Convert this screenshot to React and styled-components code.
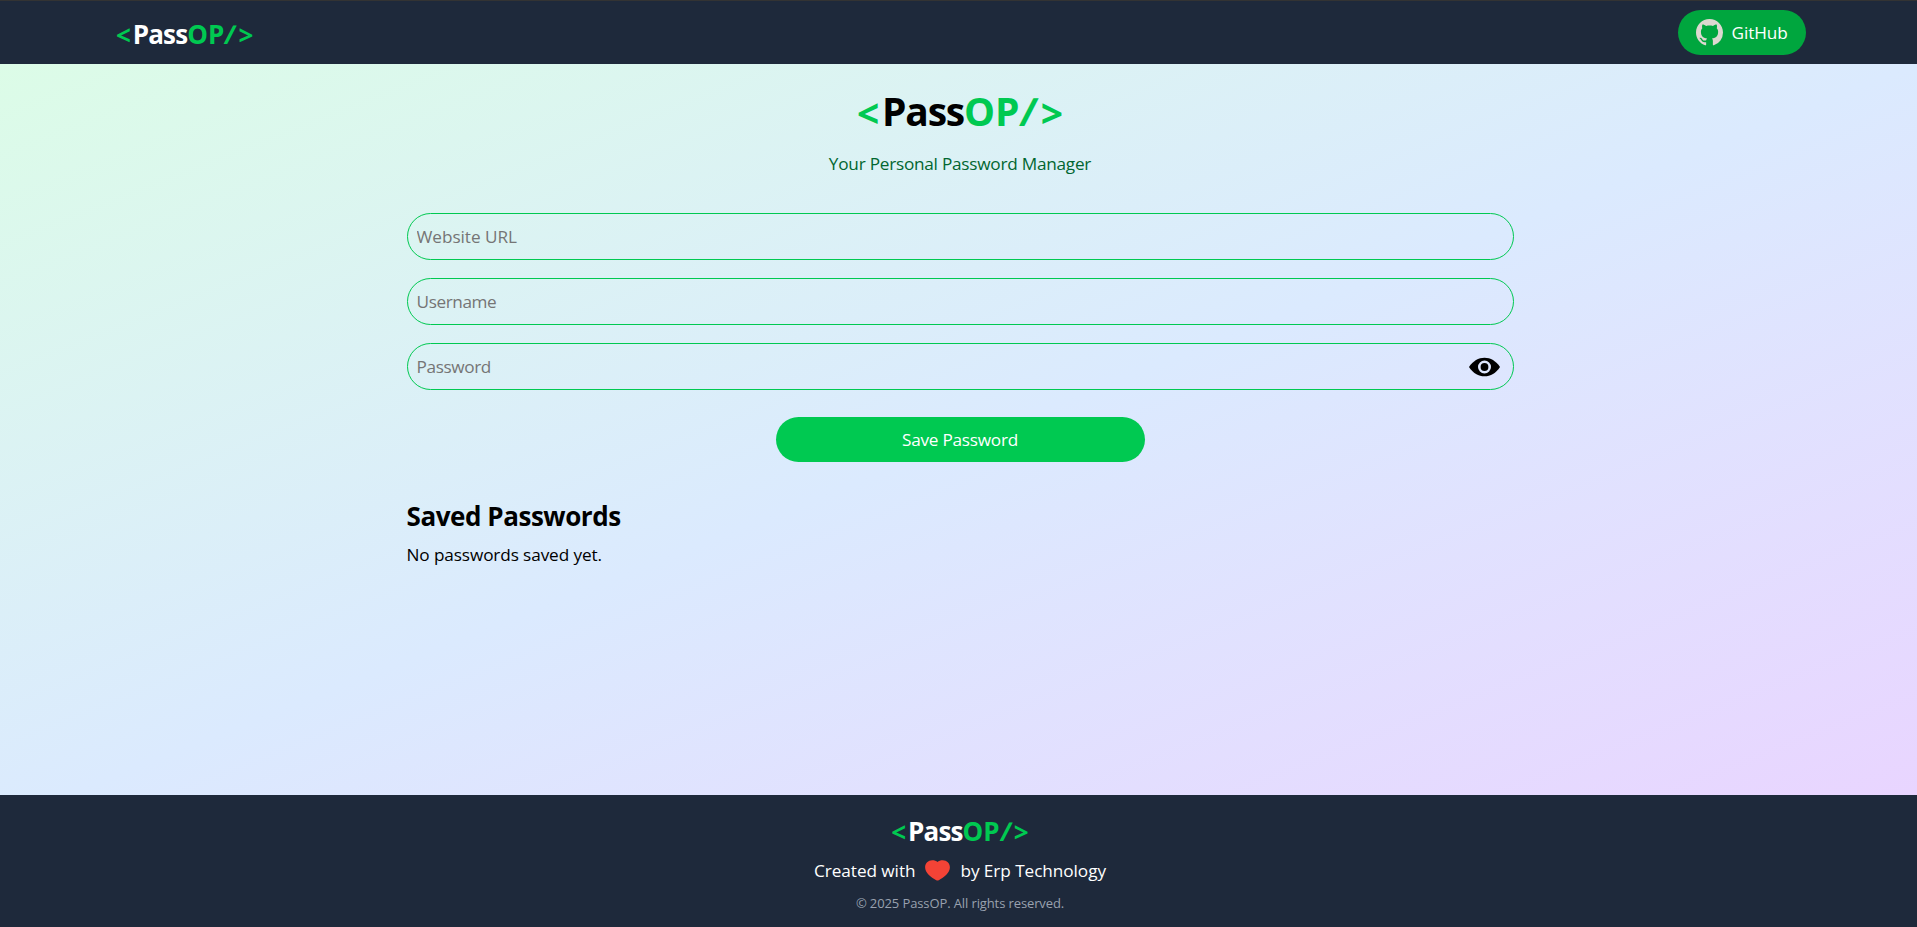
import React, { useState } from "react";
import styled, { createGlobalStyle } from "styled-components";
import { BsGithub } from "react-icons/bs";

const GlobalStyle = createGlobalStyle`
  *, *::before, *::after { box-sizing: border-box; }
  html { font-size: 18px; }
  body {
    margin: 0;
    overflow: hidden;
    font-family: "Segoe UI", "Open Sans", "Noto Sans", sans-serif;
    font-size: 17.2px;
    line-height: 27px;
    color: #000;
  }
  h1, h2, p { margin: 0; font-weight: inherit; font-size: inherit; }
`;

const Page = styled.div`
  width: 1920px;
  height: 927px;
  display: flex;
  flex-direction: column;
  border-top: 1px solid #333333;
`;

const Header = styled.header`
  flex: none;
  height: 63px;
  background: #1e293b;
  color: #fff;
`;

const HeaderInner = styled.div`
  width: 96rem;
  height: 100%;
  margin: 0 auto;
  padding: 0 1rem;
  display: flex;
  align-items: center;
  justify-content: space-between;
`;

const LogoText = styled.div`
  font-size: ${(p) => p.$size}px;
  line-height: ${(p) => p.$line}px;
  font-weight: 700;
  white-space: nowrap;
  padding: ${(p) => p.$pad || "0"};
`;

const Piece = styled.span`
  color: ${(p) => (p.$green ? "#00c951" : "inherit")};
  letter-spacing: ${(p) => p.$track || 0}em;
  margin-left: ${(p) => p.$lead || 0}em;
`;

/* The angle brackets sit slightly lower than the letters beside them. */
const Bracket = styled(Piece)`
  display: inline-block;
  transform: translateY(0.045em);
`;

/* A wider, more slanted slash than the font's own. */
const Slash = styled(Piece)`
  display: inline-block;
  transform: skewX(-8deg);
`;

const GithubButton = styled.button`
  height: 45px;
  width: 128px;
  padding: 0 18px;
  display: flex;
  align-items: center;
  gap: 8.5px;
  border: 0;
  border-radius: 999px;
  background: #00a63e;
  color: #fff;
  font: inherit;
  line-height: 27px;
  letter-spacing: -0.1px;
  white-space: nowrap;

  svg { flex: none; color: #ddd8d0; }
`;

const Main = styled.main`
  flex: 1;
  background: linear-gradient(to bottom right in oklab, #dcfce7, #dbeafe, #e9d4ff) 0 0 / 100% calc(100% + 26px) no-repeat;
`;

const Content = styled.div`
  width: 1107px;
  margin: 0 auto;
  padding-top: 24px;
  display: flex;
  flex-direction: column;
`;

const Title = styled.h1`
  display: flex;
  justify-content: center;
`;

const Tagline = styled.p`
  margin-top: 17px;
  text-align: center;
  color: #016630;
  letter-spacing: -0.24px;
`;

const Form = styled.form`
  margin-top: 36px;
  display: flex;
  flex-direction: column;
  gap: 18px;
`;

const Field = styled.div`
  height: 47px;
  display: flex;
  align-items: center;
  padding: 0 13px 0 9px;
  border: 1px solid #00c951;
  border-radius: 999px;
`;

const Input = styled.input`
  flex: 1;
  min-width: 0;
  height: 27px;
  padding: 0 0 1px;
  border: 0;
  outline: 0;
  background: transparent;
  font: inherit;
  letter-spacing: ${(p) => p.$track}px;

  &::placeholder { color: #757575; opacity: 1; }
`;

const EyeButton = styled.button`
  display: flex;
  padding: 1px 0 0;
  border: 0;
  background: none;
`;

const SaveButton = styled.button`
  width: 369px;
  height: 45px;
  margin-top: 9px;
  padding: 0 0 1px;
  align-self: center;
  border: 0;
  border-radius: 999px;
  background: #00c951;
  color: #fff;
  font: inherit;
  letter-spacing: -0.25px;
`;

const SectionTitle = styled.h2`
  margin-top: 36px;
  font-size: 26px;
  line-height: 36px;
  font-weight: 700;
  letter-spacing: -0.44px;
`;

const EmptyNote = styled.p`
  margin-top: 7px;
  letter-spacing: -0.11px;
`;

const Footer = styled.footer`
  flex: none;
  height: 132px;
  padding-top: 18px;
  display: flex;
  flex-direction: column;
  align-items: center;
  background: #1e293b;
  color: #fff;
`;

const Credit = styled.p`
  margin-top: 8px;
  display: flex;
  align-items: center;
  gap: 10px;
  letter-spacing: -0.06px;
`;

const Copyright = styled.p`
  margin-top: 10px;
  font-size: 13px;
  line-height: 18px;
  letter-spacing: -0.11px;
  color: #99a1af;
`;

function Logo({ size, line, pad }) {
  return (
    <LogoText $size={size} $line={line} $pad={pad}>
      <Bracket $green $track={0.07}>&lt;</Bracket>
      <Piece $track={-0.032}>Pass</Piece>
      <Piece $green>OP</Piece>
      <Slash $green $lead={0.035} $track={0.095}>/</Slash>
      <Bracket $green>&gt;</Bracket>
    </LogoText>
  );
}

function EyeIcon() {
  return (
    <svg width="31" height="20" viewBox="0 0 31 20">
      <path d="M0 10C4 3.800 9.500 0.700 15.500 0.700S27 3.800 31 10C27 16.200 21.500 19.300 15.500 19.300S4 16.200 0 10Z" fill="#000" />
      <circle cx="15.500" cy="10" r="5.200" fill="none" stroke="#dce6fe" strokeWidth="2.600" />
    </svg>
  );
}

function HeartIcon() {
  return (
    <svg width="25" height="21" viewBox="0 0 25 21">
      <path d="M7.200 0.300C9.400 0.300 11.400 0.900 12.500 2.100C13.600 0.900 15.600 0.300 17.800 0.300C21.800 0.300 24.900 3.200 24.900 7.200C24.900 12.800 19.200 17.200 13.700 20.200C12.900 20.700 12.100 20.700 11.300 20.200C5.800 17.200 0.100 12.800 0.100 7.200C0.100 3.200 3.200 0.300 7.200 0.300Z" fill="#f44336" />
    </svg>
  );
}

export default function App() {
  const [visible, setVisible] = useState(false);
  return (
    <Page>
      <GlobalStyle />
      <Header>
        <HeaderInner>
          <Logo size={26} line={36} pad="2px 0 0 2px" />
          <GithubButton>
            <BsGithub size={27} />
            GitHub
          </GithubButton>
        </HeaderInner>
      </Header>
      <Main>
        <Content>
          <Title>
            <Logo size={39} line={45} />
          </Title>
          <Tagline>Your Personal Password Manager</Tagline>
          <Form onSubmit={(e) => e.preventDefault()}>
            <Field>
              <Input placeholder="Website URL" $track={-0.04} />
            </Field>
            <Field>
              <Input placeholder="Username" $track={-0.4} />
            </Field>
            <Field>
              <Input type={visible ? "text" : "password"} placeholder="Password" $track={-0.38} />
              <EyeButton type="button" aria-label="Toggle password" onClick={() => setVisible(!visible)}>
                <EyeIcon />
              </EyeButton>
            </Field>
            <SaveButton>Save Password</SaveButton>
          </Form>
          <SectionTitle>Saved Passwords</SectionTitle>
          <EmptyNote>No passwords saved yet.</EmptyNote>
        </Content>
      </Main>
      <Footer>
        <Logo size={26} line={36} />
        <Credit>
          <span>Created with</span>
          <HeartIcon />
          <span>by Erp Technology</span>
        </Credit>
        <Copyright>© 2025 PassOP. All rights reserved.</Copyright>
      </Footer>
    </Page>
  );
}
